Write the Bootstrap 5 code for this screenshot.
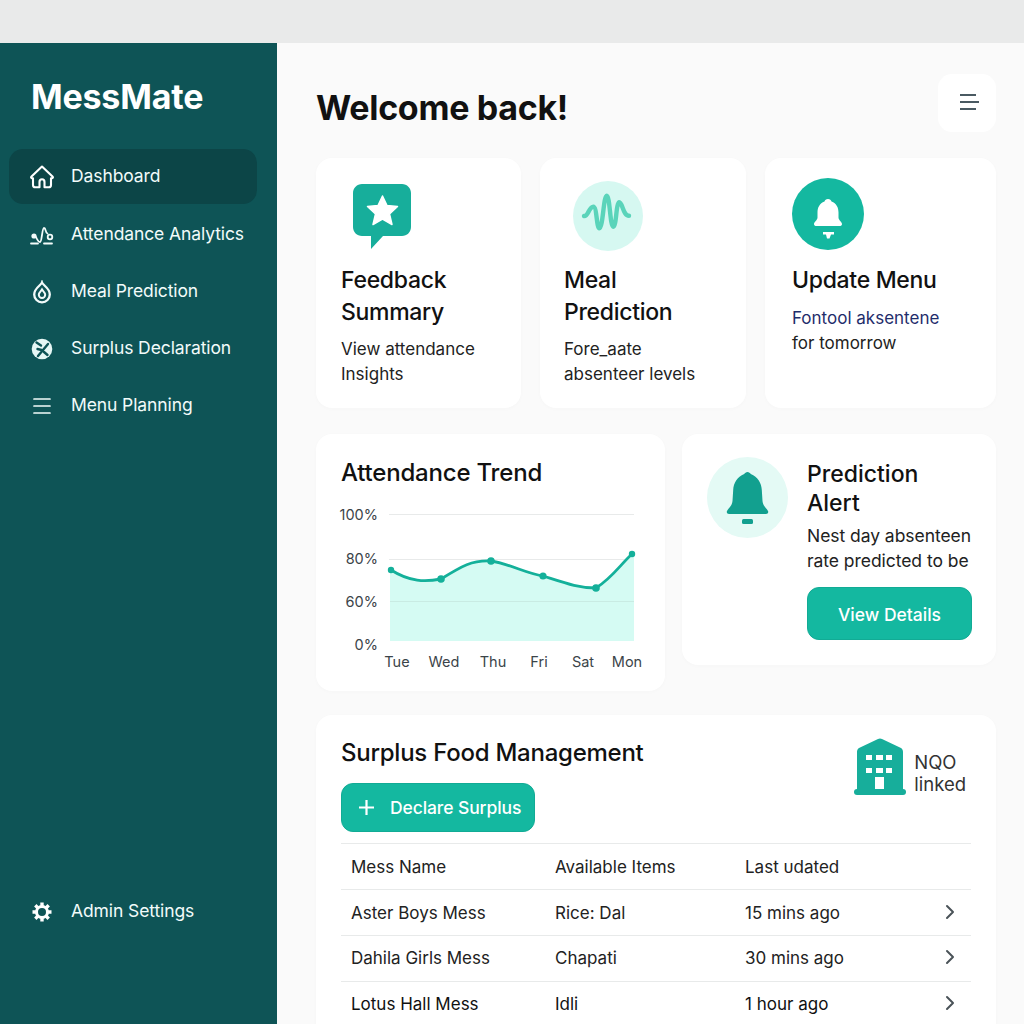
<!DOCTYPE html>
<html lang="en">
<head>
<meta charset="utf-8">
<title>MessMate</title>
<link href="https://cdn.jsdelivr.net/npm/bootstrap@5.3.0/dist/css/bootstrap.min.css" rel="stylesheet">
<style>
html,body{height:100%;overflow:hidden}
body{font-family:Inter,"Liberation Sans",sans-serif;background:#fafafa;color:#111}
.topstrip{height:43px;background:#e9eaea;flex:none}
.shell{height:981px}
.sidebar{width:277px;flex:none;background:#0e5456;color:#fff;padding-bottom:83px}
.brand{font-size:34px;font-weight:700;line-height:40px;padding:34px 0 0 31px;margin-bottom:32px;letter-spacing:-.2px;color:#fff}
.side-link{display:flex;align-items:center;gap:17px;height:55px;margin:0 20px 2px 9px;padding-left:21px;border-radius:14px;color:#f2fbfa;font-size:17.5px;text-decoration:none;white-space:nowrap;letter-spacing:-.1px}
.side-link.current{background:#0c4547;margin-bottom:3px}
.side-ico{width:24px;height:24px;flex:none}
.content{flex:1;min-width:0;padding:31px 28px 0 39px;overflow:hidden}
.page-head{height:58px;margin-bottom:26px}
.page-title{font-size:34px;font-weight:700;margin:10px 0 0;letter-spacing:-.3px;color:#111}
.burger{width:58px;height:58px;border-radius:14px;background:#fff;border:0;padding:0 0 2px 3px}
.panel{background:#fff;border:0;border-radius:16px;box-shadow:0 1px 4px rgba(20,40,40,.02)}
.row-one{gap:19px;height:250px;margin-bottom:26px}
.p-a{flex:0 0 205px;padding:26px 0 0 25px}
.p-b{flex:0 0 206px;padding:23px 0 0 24px}
.p-c{flex:0 0 231px;padding:20px 0 0 27px}
.p-a .tile-ico{height:66px;width:70px;margin-left:12px;margin-bottom:14px}
.p-b .tile-ico{height:70px;width:70px;margin-left:9px;margin-bottom:13px}
.p-c .tile-ico{height:72px;width:72px;margin-bottom:14px}
.tile-title{font-size:23px;font-weight:500;line-height:32px;margin:0 0 9px;letter-spacing:-.3px;color:#111}
.tile-text{font-size:17px;line-height:25px;margin:0;color:#222}
.p-c .tile-title{margin-bottom:10px}
.navy-text{color:#1f2d6b}
.row-two{gap:17px;margin-bottom:24px}
.trend{flex:0 0 349px;height:257px;padding:24px 25px 0}
.alert-box{flex:0 0 314px;height:231px;padding:23px 24px 0 25px;gap:19px}
.trend-title{font-size:24px;font-weight:500;line-height:30px;margin:0 0 13px;letter-spacing:-.2px;color:#111}
.trend svg{display:block;overflow:visible}
.alert-disc{width:81px;height:81px;flex:none}
.alert-title{font-size:23px;font-weight:500;line-height:29px;margin:3px 0 5px;color:#111}
.alert-text{font-size:17.5px;line-height:25px;margin:0 0 14px;color:#222;letter-spacing:-.05px}
.teal-btn{background:#14b8a0;border:1px solid #12ab95;color:#fff;font-weight:500;border-radius:12px}
.teal-btn:hover{background:#12ab95;color:#fff}
.detail-btn{width:165px;height:53px;font-size:17.5px;padding:3px 0 0}
.surplus{padding:22px 25px 0;height:400px}
.surplus-title{font-size:24px;font-weight:500;line-height:32px;margin:0 0 14px;color:#111;letter-spacing:-.25px}
.declare-btn{width:194px;height:49px;font-size:17.5px;padding:2px 0 0 16px;gap:15px;justify-content:flex-start;display:flex;align-items:center;letter-spacing:-.1px}
.declare-btn svg{margin-top:-2px}
.ngo{gap:8px;margin:1px 5px 0 0;font-size:18.5px;line-height:22px;color:#333}
.ngo span{padding-top:12px}
.food-table{table-layout:fixed;margin:11px 0 0;font-size:17px;color:#222;border-top:1px solid #e8eaea;--bs-border-color:#e8eaea}
.food-table th,.food-table td{height:46px;padding:2px 0 0 10px;vertical-align:middle;font-weight:400;color:#222}
.food-table tbody tr:nth-child(n+2) td{padding-top:0}
.food-table tbody tr:last-child td{color:#111}
.col-name{width:204px}.col-items{width:190px}.col-time{width:190px}
.chev{display:block;margin:-3px 16px 0 auto}
</style>
</head>
<body>
<div class="d-flex flex-column">
  <div class="topstrip"></div>
  <div class="d-flex shell">
    <aside class="sidebar d-flex flex-column">
      <div class="brand">MessMate</div>
      <nav class="d-flex flex-column flex-grow-1">
        <a class="side-link current" href="#">
          <svg class="side-ico" viewBox="0 0 24 24" fill="none" stroke="#fff" stroke-width="2.100" stroke-linejoin="round" stroke-linecap="round"><path d="M12 1.500 1.500 11.500c-.8.8-.3 1.800.7 1.800H3V20c0 1.500.8 2.300 2.300 2.300H9.500V17c0-1.600 1-2.700 2.500-2.700s2.500 1.100 2.500 2.700v5.300h4.200c1.500 0 2.300-.8 2.300-2.300v-6.700h.8c1 0 1.500-1 .7-1.800z"/></svg>
          <span>Dashboard</span>
        </a>
        <a class="side-link" href="#">
          <svg class="side-ico" viewBox="0 0 24 24" fill="none" stroke="#f2fbfa" stroke-width="1.800" stroke-linecap="round"><circle cx="4" cy="13" r="2.600" fill="#f2fbfa" stroke="none"/><path d="M6 14c2 4.500 3 5 4 5 2 0 2-14 4-14 2.200 0 1 4.500 3.500 5.500"/><circle cx="20" cy="14" r="2.300"/><path d="M1 20.500h7M14 20.500h8"/></svg>
          <span>Attendance Analytics</span>
        </a>
        <a class="side-link" href="#">
          <svg class="side-ico" viewBox="0 0 24 24" fill="none" stroke="#f2fbfa"><path d="M12 2.500c1 3 7.800 5.500 7.800 12a7.800 7.800 0 0 1-15.600 0c0-6.500 6.800-9 7.800-12z" stroke-width="2.300"/><path d="M12 9.500c.8 1.500 3.200 3 3.200 5.200a3.200 3.200 0 0 1-6.400 0c0-2.200 2.400-3.700 3.200-5.200z" stroke-width="2"/></svg>
          <span>Meal Prediction</span>
        </a>
        <a class="side-link" href="#">
          <svg class="side-ico" viewBox="0 0 24 24" fill="none"><circle cx="12" cy="12" r="10.300" fill="#e6f7f5"/><path d="M18 7 8 19M6.500 5.500l4.500 3M11.500 13l-4-1M14 15l3.500 3" stroke="#0e5456" stroke-width="2.400" stroke-linecap="round"/></svg>
          <span>Surplus Declaration</span>
        </a>
        <a class="side-link" href="#">
          <svg class="side-ico" viewBox="0 0 24 24" stroke="#f2fbfa" stroke-width="1.700" stroke-linecap="round"><path d="M4 5h16M4 12h16M4 19h16"/></svg>
          <span>Menu Planning</span>
        </a>
        <a class="side-link mt-auto" href="#">
          <svg class="side-ico" viewBox="0 0 24 24" fill="none" stroke="#fff"><circle cx="12" cy="12" r="5.500" stroke-width="3"/><path d="M12 2.500v4M12 17.500v4M2.500 12h4M17.500 12h4M5.300 5.300l2.800 2.800M15.900 15.900l2.800 2.800M18.700 5.300l-2.800 2.800M8.100 15.900l-2.800 2.800" stroke-width="3.400"/></svg>
          <span>Admin Settings</span>
        </a>
      </nav>
    </aside>
    <main class="content">
      <div class="page-head d-flex justify-content-between align-items-center">
        <h1 class="page-title">Welcome back!</h1>
        <button class="burger d-flex align-items-center justify-content-center" aria-label="Menu">
          <svg width="20" height="16" viewBox="0 0 20 16" stroke="#4a5a62" stroke-width="2"><path d="M1 1h16M1 8h19M1 15h16"/></svg>
        </button>
      </div>

      <div class="d-flex row-one">
        <div class="card panel p-a">
          <svg class="tile-ico" viewBox="0 0 70 66"><path d="M9 0h40c5 0 9 4 9 9v34c0 5-4 9-9 9H30L18 65V52H9c-5 0-9-4-9-9V9c0-5 4-9 9-9z" fill="#17ae9b"/><path d="M29.500 12l4.500 9.500 10.500 1-8 7.500 2.500 10.500-9.500-5.500-9.500 5.500 2.500-10.500-8-7.500 10.500-1z" fill="#fff" stroke="#fff" stroke-width="1.500" stroke-linejoin="round"/></svg>
          <h2 class="tile-title">Feedback<br>Summary</h2>
          <p class="tile-text">View attendance<br>Insights</p>
        </div>
        <div class="card panel p-b">
          <svg class="tile-ico" viewBox="0 0 70 70"><circle cx="35" cy="35" r="35" fill="#d6f8f1"/><path d="M11 35C15 36 16 25.700 20.300 25.700 24 25.700 23.500 47.300 26.300 47.300 30 47.300 30.500 14.700 33.700 14.700 37 14.700 37 45.700 40.300 45.700 43.500 45.700 43 21.300 46.300 21.300 49.500 21.300 50 34.700 56 34.700" fill="none" stroke="#5ad4ba" stroke-width="4.400" stroke-linecap="round" stroke-linejoin="round"/></svg>
          <h2 class="tile-title">Meal<br>Prediction</h2>
          <p class="tile-text">Fore_aate<br>absenteer levels</p>
        </div>
        <div class="card panel p-c">
          <svg class="tile-ico" viewBox="0 0 72 72"><circle cx="36" cy="36" r="36" fill="#14b8a0"/><path d="M36 21c2 0 3 1 3.500 2.500 5 2 7 6 7 11v5c0 2.500 3.500 4.500 3.500 6.500 0 1.500-1 2-2.500 2H24.500c-1.500 0-2.500-.5-2.500-2 0-2 3.500-4 3.500-6.500v-5c0-5 2-9 7-11C33 22 34 21 36 21z" fill="#fff"/><path d="M31 54h11v2.500h-3l-1.500 4h-2.500l-1-4h-3z" fill="#fff"/></svg>
          <h2 class="tile-title">Update Menu</h2>
          <p class="tile-text"><span class="navy-text">Fontool aksentene</span><br>for tomorrow</p>
        </div>
      </div>

      <div class="d-flex align-items-start row-two">
        <div class="card panel trend">
          <h2 class="trend-title">Attendance Trend</h2>
          <svg width="304" height="175" viewBox="341 501 304 175" font-family="Inter, 'Liberation Sans', sans-serif" font-size="14.500" fill="#3b4449">
            <path d="M389 514.500h245M389 559.500h245" stroke="#e8eaea" stroke-width="1"/>
            <path d="M390 570C410 582 425 582 441 579 462 566 472 560 491 561 510 564 525 573 543 576 565 583 578 588 596 588 612 578 620 565 632 554L634 556V641H390z" fill="#d5fbf3"/>
            <path d="M390 601.500h244" stroke="#c9ebe3" stroke-width="1"/>
            <path d="M391 570C410 582 425 582 441 579 462 566 472 560 491 561 510 564 525 573 543 576 565 583 578 588 596 588 612 578 620 565 632 554" fill="none" stroke="#14b09a" stroke-width="2.800" stroke-linecap="round"/>
            <g fill="#14b09a"><circle cx="391" cy="570" r="3.200"/><circle cx="441" cy="579" r="3.800"/><circle cx="491" cy="561" r="3.800"/><circle cx="543" cy="576" r="3.600"/><circle cx="596" cy="588" r="3.800"/><circle cx="632" cy="554" r="3.200"/></g>
            <g text-anchor="end" font-size="14.500"><text x="378" y="520">100%</text><text x="378" y="564">80%</text><text x="378" y="607">60%</text><text x="378" y="650">0%</text></g>
            <g text-anchor="middle"><text x="397" y="667">Tue</text><text x="444" y="667">Wed</text><text x="493" y="667">Thu</text><text x="539" y="667">Fri</text><text x="583" y="667">Sat</text><text x="627" y="667">Mon</text></g>
          </svg>
        </div>
        <div class="card panel alert-box flex-row">
          <svg class="alert-disc" viewBox="0 0 81 81"><circle cx="40.500" cy="40.500" r="40.500" fill="#e4faf5"/><path d="M40.500 15c1.500 0 2.500 1 3.300 2 7 3 10.700 9 11 16l.7 11c.5 5 4 7 5.500 10 .7 1.500-.3 3-2 3H22c-1.700 0-2.700-1.500-2-3 1.500-3 5-5 5.500-10l.7-11c.3-7 4-13 11-16 .8-1 1.800-2 3.300-2z" fill="#12a08f"/><rect x="35" y="62" width="11" height="5" rx="1.500" fill="#12a08f"/></svg>
          <div>
            <h2 class="alert-title">Prediction<br>Alert</h2>
            <p class="alert-text">Nest day absenteen rate predicted to be</p>
            <a href="#" class="btn teal-btn detail-btn d-flex align-items-center justify-content-center">View Details</a>
          </div>
        </div>
      </div>

      <div class="card panel surplus">
        <div class="d-flex justify-content-between align-items-start">
          <div>
            <h2 class="surplus-title">Surplus Food Management</h2>
            <a href="#" class="btn teal-btn declare-btn">
              <svg width="17" height="17" viewBox="0 0 17 17" stroke="#fff" stroke-width="2.200"><path d="M8.500 1v15M1 8.500h15"/></svg>
              <span>Declare Surplus</span>
            </a>
          </div>
          <div class="d-flex align-items-center ngo">
            <svg width="52" height="57" viewBox="0 0 52 57"><path d="M3 14c0-2 .6-3 2-4L24 1c1.300-.7 2.700-.7 4 0l19 9c1.400 1 2 2 2 4v39H3z" fill="#17ae9b"/><rect x="0" y="51" width="52" height="6" rx="3" fill="#17ae9b"/><g fill="#fff"><rect x="12" y="17" width="6" height="5"/><rect x="22" y="17" width="7" height="5"/><rect x="32" y="17" width="6" height="5"/><rect x="12" y="30" width="6" height="5"/><rect x="22" y="30" width="7" height="5"/><rect x="32" y="30" width="6" height="5"/><rect x="21" y="39" width="9" height="12"/></g></svg>
            <span>NQO<br>linked</span>
          </div>
        </div>
        <table class="table food-table">
          <thead>
            <tr><th class="col-name">Mess Name</th><th class="col-items">Available Items</th><th class="col-time">Last υdated</th><th></th></tr>
          </thead>
          <tbody>
            <tr><td>Aster Boys Mess</td><td>Rice: Dal</td><td>15 mins ago</td><td><svg class="chev" width="10" height="16" viewBox="0 0 10 16" fill="none" stroke="#4a5358" stroke-width="2" stroke-linecap="round" stroke-linejoin="round"><path d="m2 2 6 6-6 6"/></svg></td></tr>
            <tr><td>Dahila Girls Mess</td><td>Chapati</td><td>30 mins ago</td><td><svg class="chev" width="10" height="16" viewBox="0 0 10 16" fill="none" stroke="#4a5358" stroke-width="2" stroke-linecap="round" stroke-linejoin="round"><path d="m2 2 6 6-6 6"/></svg></td></tr>
            <tr><td>Lotus Hall Mess</td><td>Idli</td><td>1 hour ago</td><td><svg class="chev" width="10" height="16" viewBox="0 0 10 16" fill="none" stroke="#4a5358" stroke-width="2" stroke-linecap="round" stroke-linejoin="round"><path d="m2 2 6 6-6 6"/></svg></td></tr>
          </tbody>
        </table>
      </div>
    </main>
  </div>
</div>
<script src="https://cdn.jsdelivr.net/npm/bootstrap@5.3.0/dist/js/bootstrap.bundle.min.js"></script>
</body>
</html>
